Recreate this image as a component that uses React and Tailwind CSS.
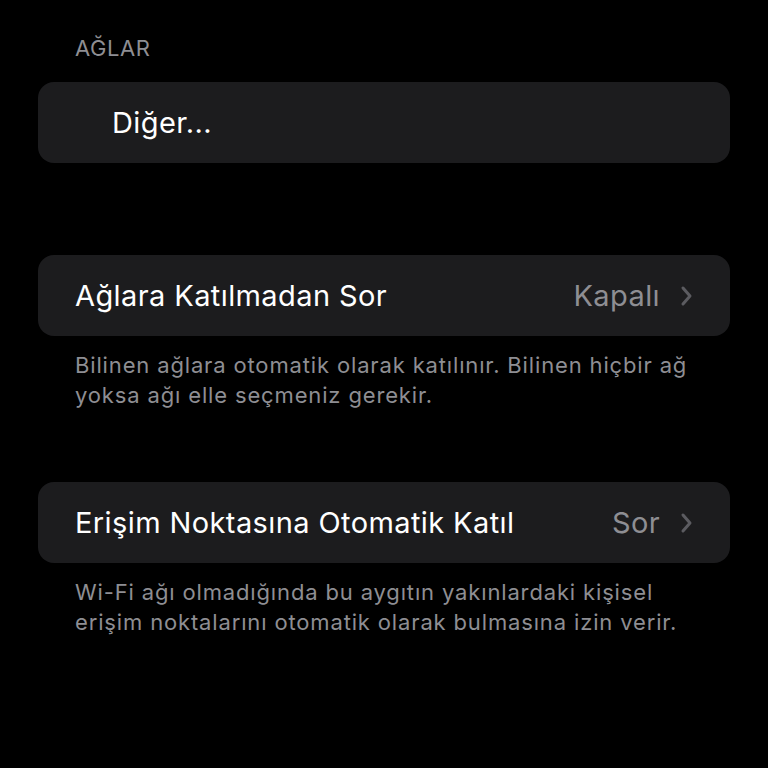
import React from "react";

function Chevron() {
  return (
    <svg width="13" height="22" viewBox="0 0 13 22" fill="none" className="ml-[20px]">
      <path d="M3 3 L10 11 L3 19" stroke="#5b5b60" strokeWidth="3" strokeLinecap="round" strokeLinejoin="round" />
    </svg>
  );
}

function NavRow({ title, value }) {
  return (
    <div className="flex h-[81px] items-center rounded-[16px] bg-[#1c1c1e] pl-[37px] pr-[37px]">
      <span className="flex-1 text-[29px] tracking-[0.4px] text-white">{title}</span>
      <span className="text-[29px] tracking-[0.4px] text-[#8e8e93]">{value}</span>
      <Chevron />
    </div>
  );
}

function Footer({ children }) {
  return (
    <p className="px-[37px] pt-[14px] text-[22px] leading-[30px] tracking-[0.85px] text-[#8e8e93]">{children}</p>
  );
}

export default function App() {
  return (
    <div
      className="h-[768px] w-[768px] overflow-hidden bg-black px-[38px] pt-[34px]"
      style={{ fontFamily: "Inter, 'Noto Sans', sans-serif" }}
    >
      <div className="px-[37px] text-[22px] leading-[28px] tracking-[0.6px] text-[#8e8e93]">AĞLAR</div>
      <div className="mt-[20px] flex h-[81px] items-center rounded-[16px] bg-[#1c1c1e] pl-[74px]">
        <span className="text-[29px] tracking-[0.4px] text-white">Diğer...</span>
      </div>

      <div className="mt-[92px]">
        <NavRow title="Ağlara Katılmadan Sor" value="Kapalı" />
        <Footer>Bilinen ağlara otomatik olarak katılınır. Bilinen hiçbir ağ yoksa ağı elle seçmeniz gerekir.</Footer>
      </div>

      <div className="mt-[72px]">
        <NavRow title="Erişim Noktasına Otomatik Katıl" value="Sor" />
        <Footer>Wi-Fi ağı olmadığında bu aygıtın yakınlardaki kişisel erişim noktalarını otomatik olarak bulmasına izin verir.</Footer>
      </div>
    </div>
  );
}
